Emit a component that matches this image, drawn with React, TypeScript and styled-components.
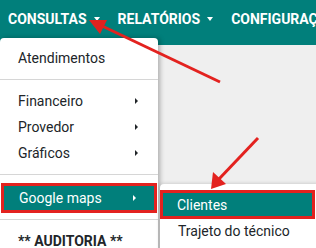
import styled, { createGlobalStyle } from "styled-components";

const TEAL = "#017f7b";
const RED = "#e3221f";

const GlobalStyle = createGlobalStyle`
  body {
    margin: 0;
    font-family: Roboto, "Liberation Sans", sans-serif;
    background: #efefef;
  }
`;

const navItems = ["CONSULTAS", "RELATÓRIOS", "CONFIGURAÇÕES"];

const App = () => {
  return (
    <StyledPage>
      <GlobalStyle />
      <StyledNav>
        {navItems.map((label) => (
          <StyledNavLink key={label}>
            {label}
            <StyledCaret />
          </StyledNavLink>
        ))}
      </StyledNav>

      <StyledMenu>
        <StyledItem>Atendimentos</StyledItem>
        <StyledDivider />
        <StyledItem>
          Financeiro <StyledSubArrow />
        </StyledItem>
        <StyledItem>
          Provedor <StyledSubArrow />
        </StyledItem>
        <StyledItem>
          Gráficos <StyledSubArrow />
        </StyledItem>
        <StyledDivider />
        <StyledItem $active>
          Google maps <StyledSubArrow $light />
        </StyledItem>
        <StyledDivider $tight />
        <StyledItem $bold>** AUDITORIA **</StyledItem>
      </StyledMenu>

      <StyledSubMenu>
        <StyledSubItem $active>Clientes</StyledSubItem>
        <StyledSubItem>Trajeto do técnico</StyledSubItem>
      </StyledSubMenu>

      <StyledArrows width="316" height="248" viewBox="0 0 316 248">
        <line x1="220" y1="82" x2="100" y2="25" stroke={RED} strokeWidth="3" />
        <polygon points="89,20 107,20 100,34" fill={RED} />
        <line x1="258" y1="138" x2="219" y2="179" stroke={RED} strokeWidth="3" />
        <polygon points="211,189 213,172 226,184" fill={RED} />
      </StyledArrows>
    </StyledPage>
  );
};

const StyledPage = styled.div`
  position: relative;
  width: 316px;
  height: 248px;
  overflow: hidden;
  background: #efefef;
`;

const StyledNav = styled.nav`
  height: 45px;
  box-sizing: border-box;
  padding: 11px 0 0 8px;
  background: ${TEAL};
  display: flex;
  align-items: flex-start;
  gap: 18px;
  white-space: nowrap;
`;

const StyledNavLink = styled.a`
  display: flex;
  align-items: center;
  gap: 7px;
  color: #fff;
  font-size: 14px;
  font-weight: 700;
  line-height: 16px;
`;

const StyledCaret = styled.span`
  width: 0;
  height: 0;
  border-left: 3.5px solid transparent;
  border-right: 3.5px solid transparent;
  border-top: 4px solid #fff;
`;

const StyledMenu = styled.div`
  position: absolute;
  top: 38px;
  left: 0;
  width: 158px;
  height: 230px;
  box-sizing: border-box;
  padding-top: 7px;
  background: #fff;
  border-radius: 4px;
  box-shadow: 2px 0 5px rgba(0, 0, 0, 0.28);
`;

const StyledItem = styled.div<{ $active?: boolean; $bold?: boolean }>`
  display: flex;
  align-items: center;
  justify-content: space-between;
  height: ${(p) => (p.$active ? "30px" : "26px")};
  box-sizing: border-box;
  margin: ${(p) => (p.$active ? "0 1px" : "0")};
  padding: ${(p) => (p.$active ? "0 18px 0 15px" : "0 20px 0 18px")};
  font-size: 14px;
  font-weight: ${(p) => (p.$bold ? 700 : 400)};
  color: ${(p) => (p.$active ? "#fff" : "#212529")};
  background: ${(p) => (p.$active ? TEAL : "transparent")};
  border: ${(p) => (p.$active ? `3px solid ${RED}` : "none")};
`;

const StyledSubArrow = styled.span<{ $light?: boolean }>`
  width: 0;
  height: 0;
  border-top: 3px solid transparent;
  border-bottom: 3px solid transparent;
  border-left: 3.5px solid ${(p) => (p.$light ? "#fff" : "#212529")};
`;

const StyledDivider = styled.hr<{ $tight?: boolean }>`
  margin: ${(p) => (p.$tight ? "6px 0 8px" : "8px 0 8px")};
  border: 0;
  border-top: 1px solid #d6d6d6;
`;

const StyledSubMenu = styled.div`
  position: absolute;
  top: 184px;
  left: 160px;
  width: 160px;
  height: 80px;
  box-sizing: border-box;
  padding-top: 6px;
  background: #fff;
  border-radius: 4px 0 0 0;
  box-shadow: 0 0 4px rgba(0, 0, 0, 0.2);
`;

const StyledSubItem = styled.div<{ $active?: boolean }>`
  display: flex;
  align-items: center;
  width: 155px;
  height: ${(p) => (p.$active ? "29px" : "24px")};
  box-sizing: border-box;
  padding-left: ${(p) => (p.$active ? "14px" : "18px")};
  font-size: 14px;
  color: ${(p) => (p.$active ? "#fff" : "#212529")};
  background: ${(p) => (p.$active ? TEAL : "transparent")};
  border: ${(p) => (p.$active ? `3px solid ${RED}` : "none")};
`;

const StyledArrows = styled.svg`
  position: absolute;
  top: 0;
  left: 0;
  pointer-events: none;
`;

export default App;
